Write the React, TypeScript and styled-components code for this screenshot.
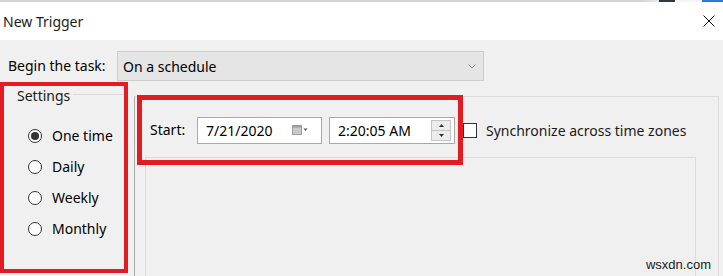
import styled, { createGlobalStyle } from 'styled-components';

const GlobalStyle = createGlobalStyle`
    html, body {
        margin: 0;
        padding: 0;
    }
    body {
        font-family: "Noto Sans", "Open Sans", sans-serif;
        color: #000;
        overflow: hidden;
    }
`;

const RED = '#e31b23';

const Window = styled.div`
    position: relative;
    width: 723px;
    height: 276px;
    background: #f0f0f0;
    overflow: hidden;
    display: flex;
    flex-direction: column;
`;

const TopStrip = styled.div`
    display: flex;
    height: 2px;
    flex-shrink: 0;
`;

const StripPart = styled.div<{ $color: string; $w?: number }>`
    background: ${p => p.$color};
    ${p => (p.$w ? `width: ${p.$w}px;` : 'flex: 1;')}
`;

const TitleBar = styled.div`
    height: 38px;
    flex-shrink: 0;
    background: #fff;
    display: flex;
    align-items: center;
    justify-content: space-between;
    padding: 0 8px 0 3px;
`;

const Title = styled.span`
    font-size: 14px;
    color: #1b1b1b;
`;

const TaskRow = styled.div`
    height: 42px;
    flex-shrink: 0;
    box-sizing: border-box;
    padding: 11px 0 0 8px;
    display: flex;
    align-items: flex-start;
`;

const FieldLabel = styled.span<{ $w: number }>`
    width: ${p => p.$w}px;
    flex-shrink: 0;
    line-height: 30px;
    font-size: 14px;
    white-space: nowrap;
`;

const Dropdown = styled.div`
    width: 367px;
    height: 30px;
    box-sizing: border-box;
    border: 1px solid #cccccc;
    background: #e5e5e5;
    display: flex;
    align-items: center;
    justify-content: space-between;
    padding: 0 7px 0 5px;
    font-size: 14px;
`;

const Main = styled.div`
    display: flex;
    align-items: flex-start;
    flex: 1;
`;

const SettingsBox = styled.div`
    width: 128px;
    height: 191px;
    box-sizing: border-box;
    border: 4px solid ${RED};
    display: flex;
    flex-direction: column;
`;

const Legend = styled.div`
    display: flex;
    align-items: center;
    height: 18px;
    padding-left: 13px;
    font-size: 14px;
    color: #1b1b1b;
`;

const LegendLine = styled.div`
    flex: 1;
    height: 1px;
    background: #dadada;
    margin-left: 3px;
    margin-top: -2px;
`;

const RadioList = styled.div`
    display: flex;
    flex-direction: column;
    margin-top: 16px;
    padding-left: 24px;
`;

const RadioItem = styled.label`
    display: flex;
    align-items: center;
    height: 31px;
    gap: 10px;
    font-size: 14px;
`;

const RadioCircle = styled.span<{ $checked?: boolean }>`
    width: 14px;
    height: 14px;
    box-sizing: border-box;
    border-radius: 50%;
    border: 1px solid #333;
    background: #fff;
    display: flex;
    align-items: center;
    justify-content: center;
    &::after {
        content: '';
        width: 8px;
        height: 8px;
        border-radius: 50%;
        background: ${p => (p.$checked ? '#333' : 'transparent')};
    }
`;

const RightGroup = styled.div`
    margin: 14px 0 0 6px;
    width: 585px;
    height: 200px;
    box-sizing: border-box;
    border: 1px solid #dcdcdc;
    border-left-color: #acacac;
    display: flex;
    flex-direction: column;
`;

const StartLine = styled.div`
    display: flex;
    align-items: center;
    margin: -2px 0 0 2px;
`;

const StartBox = styled.div`
    position: relative;
    z-index: 1;
    width: 326px;
    height: 70px;
    flex-shrink: 0;
    box-sizing: border-box;
    border: 5px solid ${RED};
    display: flex;
    align-items: center;
    padding-left: 8px;
    font-size: 14px;
`;

const InputBox = styled.div<{ $w: number }>`
    width: ${p => p.$w}px;
    height: 27px;
    flex-shrink: 0;
    box-sizing: border-box;
    border: 1px solid #a9a9a9;
    background: #fff;
    display: flex;
    align-items: center;
    justify-content: space-between;
    padding: 0 3px 0 8px;
    font-size: 14px;
    & + & {
        margin-left: 7px;
    }
`;

const Spinner = styled.div`
    display: flex;
    flex-direction: column;
    width: 20px;
    height: 21px;
`;

const SpinButton = styled.div`
    flex: 1;
    box-sizing: border-box;
    border: 1px solid #c4c4c4;
    background: #ececec;
    display: flex;
    align-items: center;
    justify-content: center;
    & + & {
        border-top: none;
    }
`;

const Checkbox = styled.span`
    width: 14px;
    height: 15px;
    flex-shrink: 0;
    box-sizing: border-box;
    border: 1px solid #333;
    background: #fff;
`;

const CheckLabel = styled.span`
    margin-left: 9px;
    font-size: 14px;
    color: #1b1b1b;
    white-space: nowrap;
`;

const InnerPanel = styled.div`
    margin: -8px 0 0 10px;
    width: 551px;
    height: 130px;
    box-sizing: border-box;
    border: 1px solid #dcdcdc;
`;

const Watermark = styled.span`
    position: absolute;
    right: 12px;
    bottom: 4px;
    font-family: "Liberation Sans", Arial, sans-serif;
    font-size: 13px;
    color: #1a1a1a;
`;

const radios = ['One time', 'Daily', 'Weekly', 'Monthly'];

export default function App() {
    return (
        <Window>
            <GlobalStyle />
            <TopStrip>
                <StripPart $color="#d3d3d3" />
                <StripPart $color="linear-gradient(90deg, #d3d3d3, #e9e9e9)" $w={19} />
                <StripPart $color="#2c3a41" $w={16} />
                <StripPart $color="#f4f4f4" $w={27} />
                <StripPart $color="#2b7ad3" $w={21} />
            </TopStrip>
            <TitleBar>
                <Title>New Trigger</Title>
                <svg width="12" height="12" viewBox="0 0 12 12">
                    <path d="M0.5 0.5L11.5 11.5M11.5 0.5L0.5 11.5" stroke="#111" strokeWidth="1" fill="none" />
                </svg>
            </TitleBar>
            <TaskRow>
                <FieldLabel $w={109}>Begin the task:</FieldLabel>
                <Dropdown>
                    <span>On a schedule</span>
                    <svg width="8" height="5" viewBox="0 0 8 5">
                        <path d="M0.5 0.5L4 4L7.5 0.5" stroke="#888" strokeWidth="1" fill="none" />
                    </svg>
                </Dropdown>
            </TaskRow>
            <Main>
                <SettingsBox>
                    <Legend>
                        Settings
                        <LegendLine />
                    </Legend>
                    <RadioList>
                        {radios.map((r, i) => (
                            <RadioItem key={r}>
                                <RadioCircle $checked={i === 0} />
                                {r}
                            </RadioItem>
                        ))}
                    </RadioList>
                </SettingsBox>
                <RightGroup>
                    <StartLine>
                        <StartBox>
                            <FieldLabel $w={47}>Start:</FieldLabel>
                            <InputBox $w={125}>
                                <span>7/21/2020</span>
                                <svg width="16" height="10" viewBox="0 0 16 10" style={{ marginRight: 10 }}>
                                    <rect x="0.5" y="0.5" width="9" height="9" fill="#c8c8c8" stroke="#a0a0a0" />
                                    <rect x="0.5" y="0.5" width="9" height="2" fill="#9a9a9a" />
                                    <path d="M11.5 3.5L15.5 3.5L13.5 6Z" fill="#555" />
                                </svg>
                            </InputBox>
                            <InputBox $w={126}>
                                <span>2:20:05 AM</span>
                                <Spinner>
                                    <SpinButton>
                                        <svg width="5" height="3" viewBox="0 0 5 3">
                                            <path d="M0 3L2.5 0L5 3Z" fill="#333" />
                                        </svg>
                                    </SpinButton>
                                    <SpinButton>
                                        <svg width="5" height="3" viewBox="0 0 5 3">
                                            <path d="M0 0L2.5 3L5 0Z" fill="#333" />
                                        </svg>
                                    </SpinButton>
                                </Spinner>
                            </InputBox>
                        </StartBox>
                        <Checkbox />
                        <CheckLabel>Synchronize across time zones</CheckLabel>
                    </StartLine>
                    <InnerPanel />
                </RightGroup>
            </Main>
            <Watermark>wsxdn.com</Watermark>
        </Window>
    );
}
